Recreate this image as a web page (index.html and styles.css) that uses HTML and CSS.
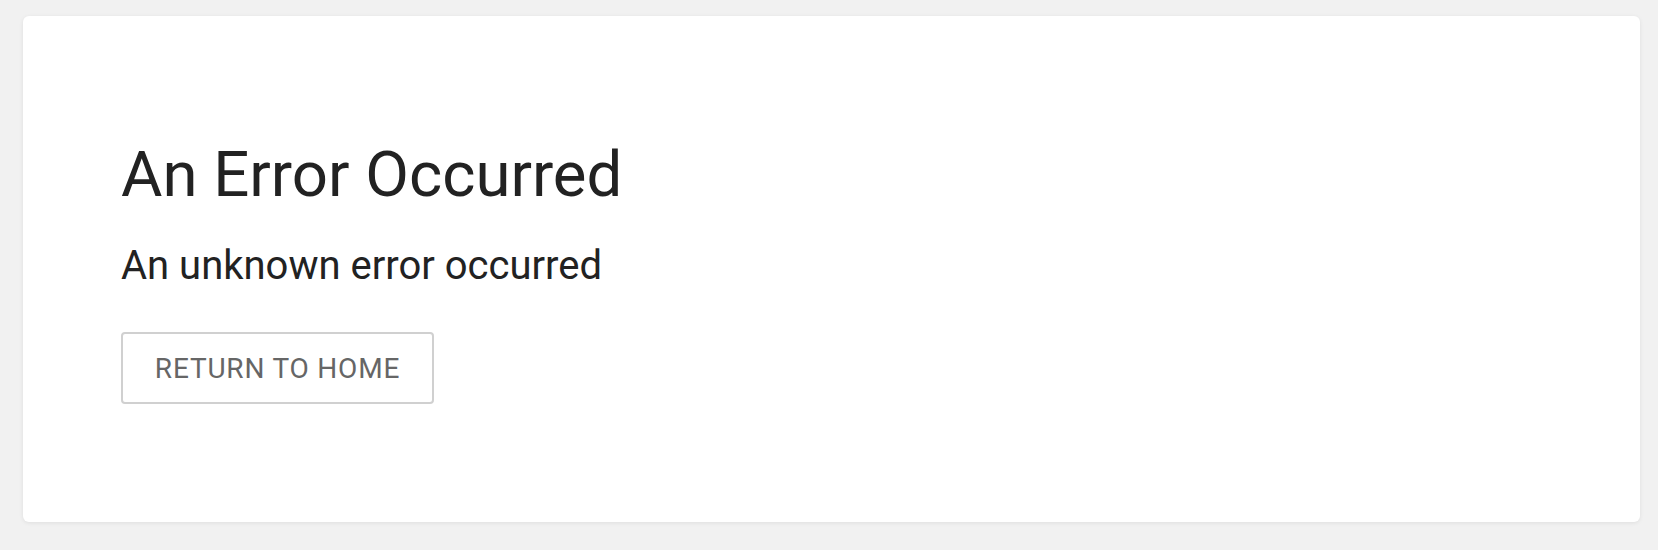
FILE: index.html
```html
<!DOCTYPE html>
<html lang="en">
<head>
<meta charset="utf-8">
<title>Error</title>
<link rel="stylesheet" href="styles.css">
</head>
<body>
<main class="page">
  <section class="card">
    <h1 class="title">An Error Occurred</h1>
    <p class="message">An unknown error occurred</p>
    <button class="btn" type="button">Return to Home</button>
  </section>
</main>
</body>
</html>
```

FILE: styles.css
```css
html, body {
  margin: 0;
  padding: 0;
  background: #f1f1f1;
}
body {
  font-family: Roboto, "Liberation Sans", sans-serif;
  color: #222;
}
.page {
  padding: 16px 18px 28px 23px;
}
.card {
  background: #fff;
  border-radius: 6px;
  box-shadow: 0 1px 4px rgba(0, 0, 0, 0.08);
  height: 506px;
  box-sizing: border-box;
  padding: 121px 98px 0 98px;
  display: flex;
  flex-direction: column;
  align-items: flex-start;
}
.title {
  margin: 0;
  font-size: 63.5px;
  font-weight: 400;
  line-height: 76px;
  letter-spacing: 0;
}
.message {
  margin: 31px 0 0;
  font-size: 40px;
  line-height: 44px;
  font-weight: 400;
}
.btn {
  margin-top: 44px;
  width: 313px;
  height: 72px;
  background: #fff;
  border: 2px solid #d0d0d0;
  border-radius: 4px;
  font-family: inherit;
  font-size: 28px;
  color: #666;
  text-transform: uppercase;
  letter-spacing: 0.8px;
  cursor: pointer;
}
```
